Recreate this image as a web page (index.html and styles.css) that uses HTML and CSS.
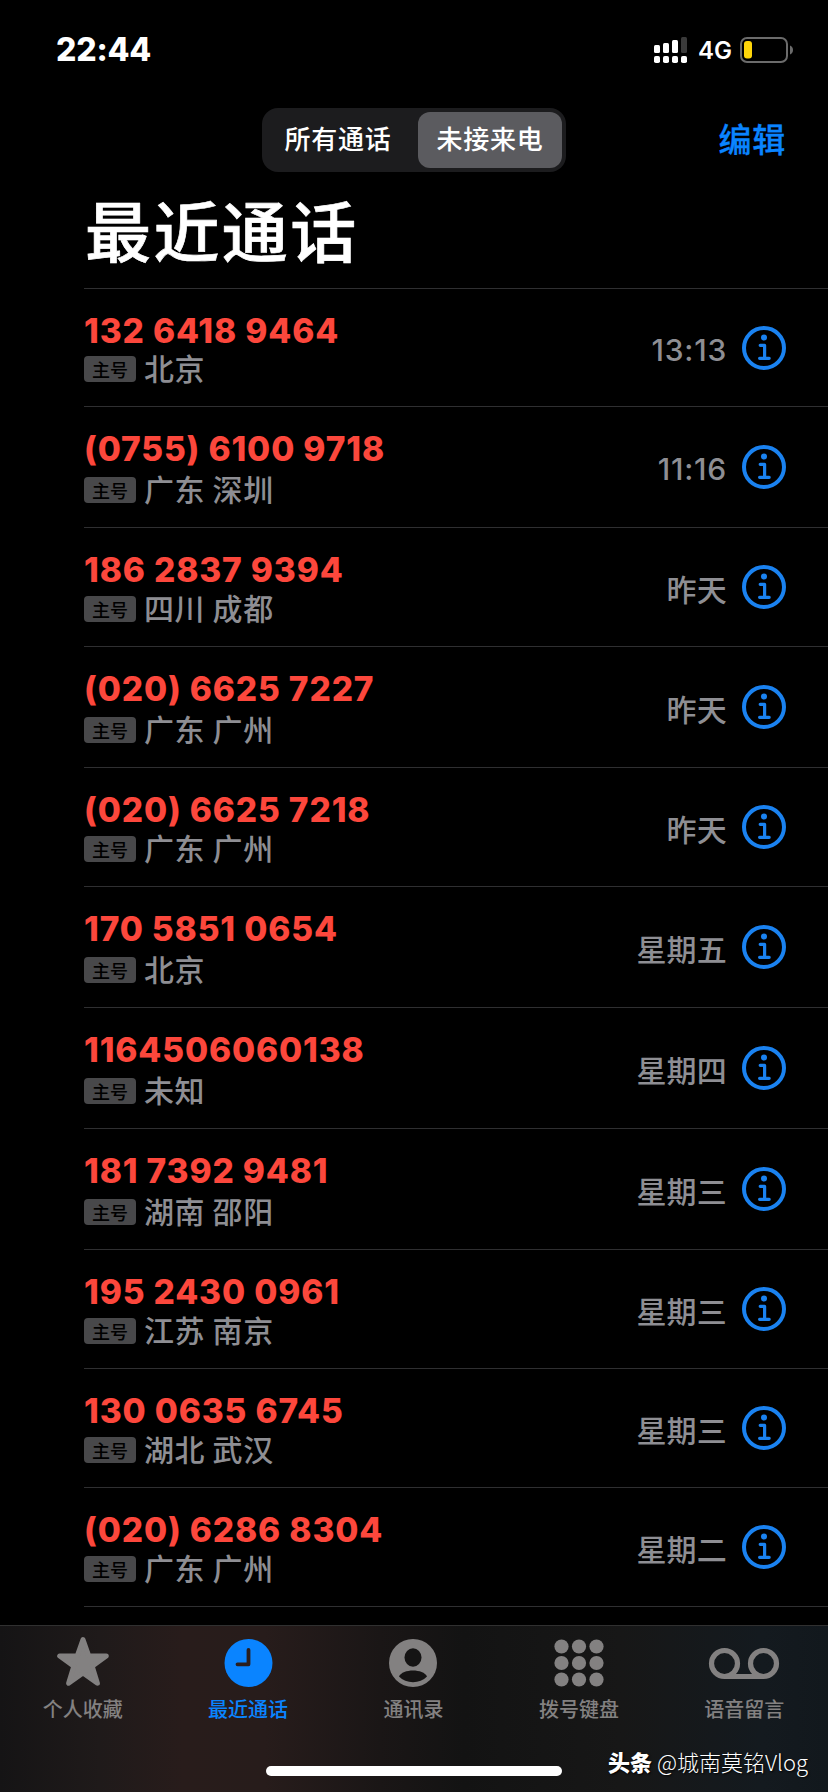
FILE: index.html
```html
<!DOCTYPE html>
<html lang="zh-CN">
<head>
  <meta charset="UTF-8">
  <meta name="viewport" content="width=device-width, initial-scale=1.0">
  <title>最近通话</title>
  <link rel="stylesheet" href="styles.css">
</head>
<body>
  <!-- Shared info icon -->
  <svg class="symbols" width="0" height="0">
    <symbol id="icon-info" viewBox="0 0 44 44">
      <circle cx="22" cy="22" r="20" fill="none" stroke="currentColor" stroke-width="4"/>
      <circle cx="22" cy="11.6" r="3" fill="currentColor"/>
      <path d="M18.2 19.3H22.6V32M17.6 32.3H27.2" fill="none" stroke="currentColor" stroke-width="3.2" stroke-linecap="round" stroke-linejoin="round"/>
    </symbol>
  </svg>

  <div class="phone">
    <header class="status-bar">
      <div class="clock">22:44</div>
      <div class="status-icons">
        <svg class="signal" width="34" height="28" viewBox="0 0 34 28" fill="#fff">
          <rect x="0" y="9" width="6" height="8" rx="1.5"/>
          <rect x="9" y="7" width="6" height="10" rx="1.5"/>
          <rect x="18" y="4" width="6" height="13" rx="1.5"/>
          <rect x="27" y="1" width="6" height="16" rx="1.5" fill="#3a3a3a"/>
          <rect x="0" y="20" width="6" height="7" rx="1.8"/>
          <rect x="9" y="20" width="6" height="7" rx="1.8"/>
          <rect x="18" y="20" width="6" height="7" rx="1.8"/>
          <rect x="27" y="20" width="6" height="7" rx="1.8"/>
        </svg>
        <span class="network">4G</span>
        <svg width="54" height="26" viewBox="0 0 54 26">
          <rect x="1" y="1" width="46" height="24" rx="6" fill="none" stroke="#6b6b6b" stroke-width="2"/>
          <rect x="4" y="4" width="8" height="17.5" rx="3" fill="#ffd60a"/>
          <path d="M50 8.5C52 9.3 53 11 53 13S52 16.700 50 17.500Z" fill="#6b6b6b"/>
        </svg>
      </div>
    </header>

    <nav class="nav-bar">
      <div class="segmented">
        <div class="segment">所有通话</div>
        <div class="segment active">未接来电</div>
      </div>
      <a class="edit">编辑</a>
    </nav>

    <h1 class="title">最近通话</h1>

    <ul class="calls">
      <li class="call first">
        <div class="caller"><div class="number">132 6418 9464</div><div class="place"><span class="badge">主号</span>北京</div></div>
        <div class="time digits">13:13</div>
        <svg class="info"><use href="#icon-info"/></svg>
      </li>
      <li class="call tall">
        <div class="caller"><div class="number">(0755) 6100 9718</div><div class="place"><span class="badge">主号</span>广东 深圳</div></div>
        <div class="time digits">11:16</div>
        <svg class="info"><use href="#icon-info"/></svg>
      </li>
      <li class="call">
        <div class="caller"><div class="number">186 2837 9394</div><div class="place"><span class="badge">主号</span>四川 成都</div></div>
        <div class="time">昨天</div>
        <svg class="info"><use href="#icon-info"/></svg>
      </li>
      <li class="call tall">
        <div class="caller"><div class="number">(020) 6625 7227</div><div class="place"><span class="badge">主号</span>广东 广州</div></div>
        <div class="time">昨天</div>
        <svg class="info"><use href="#icon-info"/></svg>
      </li>
      <li class="call">
        <div class="caller"><div class="number">(020) 6625 7218</div><div class="place"><span class="badge">主号</span>广东 广州</div></div>
        <div class="time">昨天</div>
        <svg class="info"><use href="#icon-info"/></svg>
      </li>
      <li class="call tall">
        <div class="caller"><div class="number">170 5851 0654</div><div class="place"><span class="badge">主号</span>北京</div></div>
        <div class="time">星期五</div>
        <svg class="info"><use href="#icon-info"/></svg>
      </li>
      <li class="call tall">
        <div class="caller"><div class="number">1164506060138</div><div class="place"><span class="badge">主号</span>未知</div></div>
        <div class="time">星期四</div>
        <svg class="info"><use href="#icon-info"/></svg>
      </li>
      <li class="call tall">
        <div class="caller"><div class="number">181 7392 9481</div><div class="place"><span class="badge">主号</span>湖南 邵阳</div></div>
        <div class="time">星期三</div>
        <svg class="info"><use href="#icon-info"/></svg>
      </li>
      <li class="call">
        <div class="caller"><div class="number">195 2430 0961</div><div class="place"><span class="badge">主号</span>江苏 南京</div></div>
        <div class="time">星期三</div>
        <svg class="info"><use href="#icon-info"/></svg>
      </li>
      <li class="call">
        <div class="caller"><div class="number">130 0635 6745</div><div class="place"><span class="badge">主号</span>湖北 武汉</div></div>
        <div class="time">星期三</div>
        <svg class="info"><use href="#icon-info"/></svg>
      </li>
      <li class="call">
        <div class="caller"><div class="number">(020) 6286 8304</div><div class="place"><span class="badge">主号</span>广东 广州</div></div>
        <div class="time">星期二</div>
        <svg class="info"><use href="#icon-info"/></svg>
      </li>
    </ul>

    <footer class="tab-bar">
      <div class="tabs">
        <div class="tab">
          <svg width="54" height="54" viewBox="0 0 54 54" fill="currentColor" stroke="currentColor" stroke-width="5" stroke-linejoin="round">
            <path d="M27 4.500L32.800 21H50.300L36.200 31.300L41.400 48.200L27 38L12.600 48.200L17.800 31.300L3.700 21H21.200Z"/>
          </svg>
          <span>个人收藏</span>
        </div>
        <div class="tab active">
          <svg width="54" height="54" viewBox="0 0 54 54">
            <circle cx="27.500" cy="28" r="24" fill="currentColor"/>
            <path d="M27.500 15V29.300H16.500" fill="none" stroke="#2a1e1e" stroke-width="3.800" stroke-linecap="round" stroke-linejoin="round"/>
          </svg>
          <span>最近通话</span>
        </div>
        <div class="tab">
          <svg width="54" height="54" viewBox="0 0 54 54">
            <circle cx="27" cy="28" r="24" fill="currentColor"/>
            <ellipse cx="27" cy="22.500" rx="8.500" ry="9.300" fill="#151414"/>
            <path d="M13 41.500C16.500 33.500 37.500 33.500 41 41.500C34 49 20 49 13 41.500Z" fill="#151414"/>
          </svg>
          <span>通讯录</span>
        </div>
        <div class="tab">
          <svg width="54" height="54" viewBox="0 0 54 54" fill="currentColor">
            <circle cx="9.500" cy="11.500" r="7.100"/><circle cx="27" cy="11.500" r="7.100"/><circle cx="44.500" cy="11.500" r="7.100"/>
            <circle cx="9.500" cy="28" r="7.100"/><circle cx="27" cy="28" r="7.100"/><circle cx="44.500" cy="28" r="7.100"/>
            <circle cx="9.500" cy="44.500" r="7.100"/><circle cx="27" cy="44.500" r="7.100"/><circle cx="44.500" cy="44.500" r="7.100"/>
          </svg>
          <span>拨号键盘</span>
        </div>
        <div class="tab">
          <svg width="72" height="54" viewBox="0 0 72 54" fill="none" stroke="currentColor" stroke-width="5.200">
            <circle cx="16.500" cy="28.500" r="13"/>
            <circle cx="55.500" cy="28.500" r="13"/>
            <path d="M16.500 41.500H55.500"/>
          </svg>
          <span>语音留言</span>
        </div>
      </div>
      <div class="home-indicator"></div>
      <div class="watermark"><b>头条</b> @城南莫铭Vlog</div>
    </footer>
  </div>
</body>
</html>
```
FILE: styles.css
```css
/**
 * Initializers.
 */
* {
  box-sizing: border-box;
}
body {
  margin: 0;
  color: white;
  background-color: black;
  font-family: Inter, 'Noto Sans CJK SC', sans-serif;
}
.symbols {
  position: absolute;
}
.phone {
  display: flex;
  flex-direction: column;
  width: 828px;
  height: 1792px;
  overflow: hidden;
}

/**
 * Status bar.
 */
.status-bar {
  display: flex;
  justify-content: space-between;
  height: 108px;
  padding: 30px 34px 0 56px;
}
.clock {
  height: 40px;
  line-height: 40px;
  font-size: 32px;
  font-weight: 800;
  letter-spacing: -0.2px;
}
.status-icons {
  display: flex;
  align-items: center;
  height: 40px;
}
.network {
  width: 33px;
  margin: 1px 9px 0 10px;
  font-size: 24px;
  font-weight: 600;
}

/**
 * Navigation and title.
 */
.nav-bar {
  display: grid;
  grid-template-columns: 1fr 304px 1fr;
  align-items: center;
  height: 64px;
  padding-right: 42px;
  padding-left: 42px;
}
.segmented {
  grid-column: 2;
  display: grid;
  grid-template-columns: 1fr 144px;
  height: 64px;
  padding: 4px;
  border-radius: 16px;
  background-color: #1c1c1e;
}
.segment {
  padding-right: 8px;
  line-height: 56px;
  text-align: center;
  font-size: 26px;
  font-weight: 500;
  letter-spacing: 0.8px;
}
.segment.active {
  padding-right: 0;
  border-radius: 12px;
  background-color: #5b5b5f;
}
.edit {
  justify-self: end;
  color: #0a84ff;
  font-size: 33px;
  font-weight: 500;
  line-height: 60px;
  letter-spacing: 0.8px;
  -webkit-text-stroke: 0.3px currentColor;
}
.title {
  height: 116px;
  margin: 0;
  padding-left: 85px;
  font-size: 66px;
  font-weight: 500;
  line-height: 122px;
  letter-spacing: 2.4px;
  -webkit-text-stroke: 0.7px currentColor;
}

/**
 * Call list.
 */
.calls {
  margin: 0 0 0 84px;
  padding: 0;
  list-style: none;
  border-top: 1px solid #2f2f31;
}
.call {
  display: flex;
  align-items: center;
  height: 119px;
  padding-right: 42px;
  border-bottom: 1px solid #2f2f31;
}
.call.first {
  height: 118px;
}
.call.tall {
  height: 121px;
}
.caller {
  display: flex;
  flex: 1;
  flex-direction: column;
  justify-content: space-between;
  height: 100%;
  padding: 24px 0 21px;
}
.number {
  height: 36px;
  color: #fc473c;
  font-size: 33.5px;
  font-weight: 800;
  line-height: 36px;
  letter-spacing: 0.85px;
}
.place {
  display: flex;
  align-items: center;
  height: 36px;
  color: #8e8e93;
  font-family: 'Noto Sans CJK SC', sans-serif;
  font-size: 30px;
  font-weight: 500;
  line-height: 36px;
  letter-spacing: 0.6px;
}
.badge {
  width: 52px;
  height: 26px;
  margin: 4px 8px 0 0;
  color: black;
  text-align: center;
  font-size: 18px;
  font-weight: 500;
  line-height: 26px;
  letter-spacing: 0;
  border-radius: 4px;
  background-color: #48484a;
}
.time {
  margin-right: 15px;
  padding-top: 2px;
  color: #8e8e93;
  font-size: 30px;
  font-weight: 500;
  letter-spacing: 0.2px;
}
.time.digits {
  padding-top: 4px;
  letter-spacing: 0.8px;
}
.info {
  width: 44px;
  height: 44px;
  color: #1a82f0;
}

/**
 * Tab bar.
 */
.tab-bar {
  position: relative;
  flex: 1;
  margin-top: 18px;
  border-top: 1px solid #303030;
  background: linear-gradient(90deg, #151415 0%, #1f1a1a 12%, #281c1b 22%, #271c1b 32%, #1a1616 46%, #131313 56%, #171717 75%, #141a1f 92%, #12181d 100%);
}
.tabs {
  display: grid;
  grid-template-columns: repeat(5, 1fr);
  padding: 9px 1px 0 0;
}
.tab {
  display: flex;
  flex-direction: column;
  align-items: center;
  color: #838181;
}
.tab.active {
  color: #0a84ff;
}
.tab span {
  height: 30px;
  margin-top: 5px;
  font-size: 20px;
  font-weight: 500;
  line-height: 32px;
}
.home-indicator {
  width: 296px;
  height: 10px;
  margin: 42px auto 0;
  border-radius: 5px;
  background-color: white;
}
.watermark {
  position: absolute;
  top: 119px;
  right: 20px;
  font-family: 'Noto Sans CJK SC', sans-serif;
  font-size: 22px;
  font-weight: 300;
  line-height: 32px;
  text-shadow: 1px 1px 2px black;
}
.watermark b {
  font-weight: 900;
}
```
